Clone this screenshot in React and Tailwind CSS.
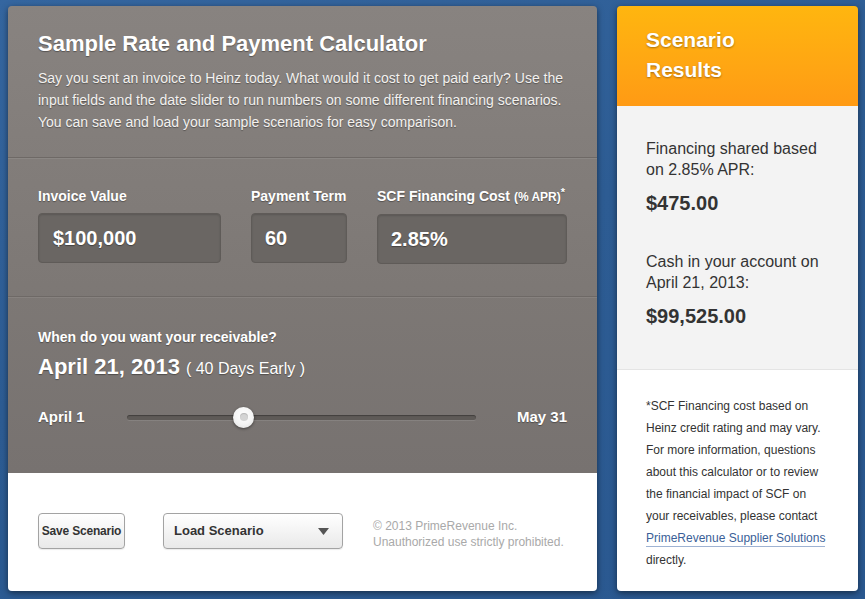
export default function App() {
  return (
    <div className="min-h-[599px] w-[865px] bg-[linear-gradient(160deg,#3566a0_0%,#2d5c93_45%,#2a5890_100%)] pt-[6px] pl-[8px] font-['Liberation_Sans',Arial,sans-serif]">
      <div className="flex gap-[20px]">
        {/* Calculator */}
        <div className="w-[589px] h-[585px] rounded-[4px] overflow-hidden shadow-[0_2px_6px_rgba(0,0,0,0.5)] flex flex-col">
          <div className="bg-[linear-gradient(180deg,#888380_0%,#7d7875_60%,#777270_100%)] text-white [text-shadow:0_1px_1px_rgba(0,0,0,0.35)]">
            {/* Intro */}
            <div className="px-[30px] pt-[23px] pb-[24px] border-b border-[#6e6966] shadow-[0_1px_0_rgba(255,255,255,0.08)]">
              <h1 className="text-[22px] leading-[30px] font-bold">Sample Rate and Payment Calculator</h1>
              <p className="mt-[8px] text-[14px] leading-[22px] text-[#f3f1ef] whitespace-nowrap">
                Say you sent an invoice to Heinz today. What would it cost to get paid early? Use the<br />
                input fields and the date slider to run numbers on some different financing scenarios.<br />
                You can save and load your sample scenarios for easy comparison.
              </p>
            </div>

            {/* Inputs */}
            <div className="px-[30px] pt-[28px] pb-[32px] border-b border-[#6e6966] shadow-[0_1px_0_rgba(255,255,255,0.08)] flex">
              <div className="w-[183px]">
                <div className="text-[14px] leading-[20px] font-bold">Invoice Value</div>
                <div className="mt-[7px] h-[50px] rounded-[4px] bg-[#6a6663] border border-[#5f5b58] shadow-[inset_0_1px_2px_rgba(0,0,0,0.15)] flex items-center pl-[14px] text-[20px] font-bold">$100,000</div>
              </div>
              <div className="w-[96px] ml-[30px]">
                <div className="text-[14px] leading-[20px] font-bold whitespace-nowrap">Payment Term</div>
                <div className="mt-[7px] h-[50px] rounded-[4px] bg-[#6a6663] border border-[#5f5b58] shadow-[inset_0_1px_2px_rgba(0,0,0,0.15)] flex items-center pl-[13px] text-[20px] font-bold">60</div>
              </div>
              <div className="w-[190px] ml-[30px]">
                <div className="text-[14px] leading-[20px] font-bold whitespace-nowrap">
                  SCF Financing Cost <span className="text-[12px]">(% APR)</span><sup className="text-[11px] -top-[5px]">*</sup>
                </div>
                <div className="mt-[7px] h-[50px] rounded-[4px] bg-[#6a6663] border border-[#5f5b58] shadow-[inset_0_1px_2px_rgba(0,0,0,0.15)] flex items-center pl-[13px] text-[20px] font-bold">2.85%</div>
              </div>
            </div>

            {/* Slider */}
            <div className="px-[30px] pt-[30px] pb-[44px]">
              <div className="text-[14px] leading-[20px] font-bold">When do you want your receivable?</div>
              <div className="mt-[5px] leading-[30px]">
                <span className="text-[22px] font-bold">April 21, 2013</span>
                <span className="text-[16px] ml-[6px]">( 40 Days Early )</span>
              </div>
              <div className="mt-[21px] h-[24px] flex items-center">
                <span className="w-[89px] text-[15px] font-bold">April 1</span>
                <div className="relative w-[349px] h-[5px] rounded-full bg-[#5e5a57] shadow-[inset_0_1px_1px_rgba(0,0,0,0.3),0_1px_0_rgba(255,255,255,0.1)]">
                  <div className="absolute left-[106px] -top-[8px] w-[21px] h-[21px] rounded-full bg-[radial-gradient(circle_at_50%_40%,#ffffff_0%,#f4f4f4_55%,#dcdcdc_100%)] shadow-[0_1px_3px_rgba(0,0,0,0.45)] flex items-center justify-center">
                    <div className="w-[8px] h-[8px] rounded-full bg-[#d4d4d4] shadow-[inset_0_1px_1px_rgba(0,0,0,0.15)]"></div>
                  </div>
                </div>
                <span className="ml-auto text-[15px] font-bold">May 31</span>
              </div>
            </div>
          </div>

          {/* Footer */}
          <div className="flex-1 bg-white px-[30px] pt-[40px] flex items-start">
            <button className="h-[36px] w-[87px] rounded-[4px] border border-[#a3a3a3] bg-[linear-gradient(180deg,#ffffff,#e9e9e9)] text-[12px] font-bold text-[#333] whitespace-nowrap tracking-[-0.2px] shadow-[0_1px_1px_rgba(0,0,0,0.08)]">Save Scenario</button>
            <button className="ml-[38px] h-[36px] w-[180px] rounded-[4px] border border-[#a3a3a3] bg-[linear-gradient(180deg,#ffffff,#e9e9e9)] text-[13px] font-bold text-[#333] flex items-center pl-[10px] pr-[13px] shadow-[0_1px_1px_rgba(0,0,0,0.08)]">
              <span>Load Scenario</span>
              <svg className="ml-auto" width="11" height="7" viewBox="0 0 11 7">
                <path d="M0 0 L11 0 L5.5 7 Z" fill="#555" />
              </svg>
            </button>
            <div className="ml-[30px] mt-[5px] text-[12px] leading-[16px] text-[#a9a9a9] whitespace-nowrap">
              © 2013 PrimeRevenue Inc.<br />
              Unauthorized use strictly prohibited.
            </div>
          </div>
        </div>

        {/* Results */}
        <div className="w-[241px] h-[585px] rounded-[4px] overflow-hidden shadow-[0_2px_6px_rgba(0,0,0,0.5)] flex flex-col">
          <div className="h-[100px] bg-[linear-gradient(180deg,#ffb60f_0%,#ffa613_60%,#ff9a14_100%)] pl-[29px] pt-[19px]">
            <h2 className="text-[21px] leading-[30px] font-bold text-white [text-shadow:0_1px_2px_rgba(0,0,0,0.35)]">Scenario<br />Results</h2>
          </div>
          <div className="bg-[#f3f3f3] pl-[29px] pt-[32px] pb-[39px] text-[#333] border-b border-[#e4e4e4]">
            <div className="text-[16px] leading-[21px]">Financing shared based<br />on 2.85% APR:</div>
            <div className="mt-[9px] text-[20px] leading-[28px] font-bold">$475.00</div>
            <div className="mt-[34px] text-[16px] leading-[21px]">Cash in your account on<br />April 21, 2013:</div>
            <div className="mt-[9px] text-[20px] leading-[28px] font-bold">$99,525.00</div>
          </div>
          <div className="flex-1 bg-white pl-[29px] pt-[25px] text-[12px] leading-[22px] text-[#333] whitespace-nowrap">
            *SCF Financing cost based on<br />
            Heinz credit rating and may vary.<br />
            For more information, questions<br />
            about this calculator or to review<br />
            the financial impact of SCF on<br />
            your receivables, please contact<br />
            <a href="#" className="text-[#3b5f98] border-b border-[#9fb3d3] pb-[1px]">PrimeRevenue Supplier Solutions</a><br />
            directly.
          </div>
        </div>
      </div>
    </div>
  );
}
